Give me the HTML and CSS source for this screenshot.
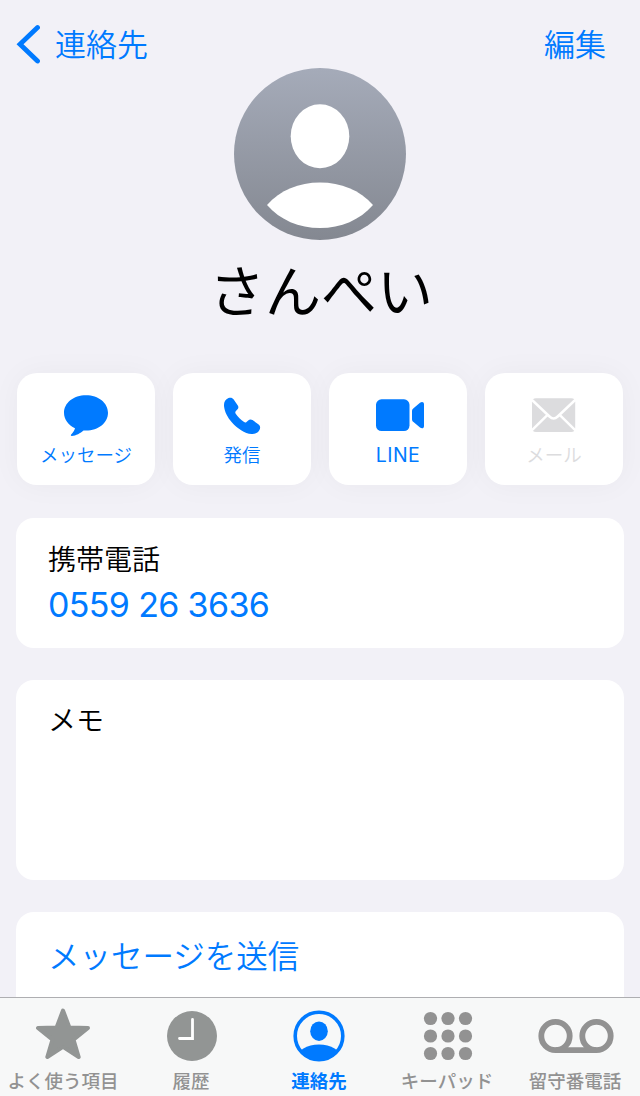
FILE: index.html
```html
<!DOCTYPE html>
<html lang="ja">
<head>
    <meta charset="UTF-8">
    <meta name="viewport" content="width=device-width, initial-scale=1.0">
    <title>連絡先</title>
    <link rel="stylesheet" href="styles.css">
</head>
<body>
    <div class="screen">
        <div class="content">
            <div class="navbar">
                <a class="back">
                    <svg width="24" height="40" viewBox="0 0 24 40"><path d="M21.5 3.5 L4 20.2 L21.5 37" fill="none" stroke="#007aff" stroke-width="4.8" stroke-linecap="round" stroke-linejoin="miter"/></svg>
                    <span>連絡先</span>
                </a>
                <a class="edit">編集</a>
            </div>

            <svg class="avatar" width="172" height="172" viewBox="0 0 172 172">
                <defs>
                    <linearGradient id="avatarBg" x1="0" y1="0" x2="0" y2="1">
                        <stop offset="0" stop-color="#a5abb9"/>
                        <stop offset="1" stop-color="#848891"/>
                    </linearGradient>
                </defs>
                <circle cx="86" cy="86" r="86" fill="url(#avatarBg)"/>
                <ellipse cx="86" cy="68.3" rx="29.3" ry="32" fill="#fff"/>
                <path d="M33 137 C46 122 65 114.5 86 114.5 C107 114.5 126 122 139 137 C126 152 107 160 86 160 C65 160 46 152 33 137 Z" fill="#fff"/>
            </svg>
            <h1 class="name">さんぺい</h1>

            <div class="actions">
                <a class="action">
                    <svg width="50" height="48" viewBox="0 0 50 48"><path d="M25 4.2 C37.5 4.2 47 11.8 47 21.8 C47 31.8 37.5 39.6 25 39.6 L22.5 39.5 C19.5 42.2 15 44.8 10.8 44.9 C9.6 44.9 9.6 44 10.4 43.2 C12.3 41.3 13.5 39.5 14 37.3 C7.4 34.2 3 28.5 3 21.8 C3 11.8 12.5 4.2 25 4.2 Z" fill="#007aff"/></svg>
                    <span>メッセージ</span>
                </a>
                <a class="action">
                    <svg width="50" height="48" viewBox="0 0 50 48"><path d="M11.5 7.1 C13.7 6.4 15.4 6.8 16.7 8.6 L20.8 14.4 C21.8 15.9 21.5 17.4 20.3 18.6 L18.9 20.1 C18.1 20.9 18.1 21.7 18.7 22.7 C20.8 25.8 23.9 28.9 27.1 31.1 C28 31.7 28.8 31.6 29.5 30.9 L31.2 29.5 C32.4 28.3 34 28.1 35.5 29.1 L41.3 33.2 C43.3 34.6 43.5 36.4 42.7 38.5 C41.3 41.7 38.3 43.2 34.7 43 C27.5 42.5 20.3 37.2 15 31.4 C10.6 26.5 7.5 20.5 7 14.9 C6.8 11.3 8.3 8.3 11.5 7.1 Z" fill="#007aff"/></svg>
                    <span>発信</span>
                </a>
                <a class="action">
                    <svg width="50" height="48" viewBox="0 0 50 48">
                        <rect x="3" y="8.3" width="33.5" height="31.7" rx="5.5" fill="#007aff"/>
                        <path d="M39 20.3 C39 18.9 39.4 18.1 40.5 17.2 L47 11.7 C49 10.2 51 10.9 51 13.2 L51 35 C51 37.3 49 38 47 36.5 L40.5 31 C39.4 30.1 39 29.3 39 27.9 Z" fill="#007aff"/>
                    </svg>
                    <span class="latin">LINE</span>
                </a>
                <a class="action disabled">
                    <svg width="50" height="48" viewBox="0 0 50 48">
                        <rect x="3" y="7.2" width="43.2" height="33.8" rx="4" fill="#dcdcde"/>
                        <path d="M2.5 8.5 L20.5 25.5 Q24.6 29.5 28.7 25.5 L46.7 8.5 M2.5 39.7 L18.3 24.2 M46.7 39.7 L30.9 24.2" fill="none" stroke="#fff" stroke-width="2.5"/>
                    </svg>
                    <span>メール</span>
                </a>
            </div>

            <div class="card phone">
                <div class="label">携帯電話</div>
                <div class="number">0559 26 3636</div>
            </div>
            <div class="card memo">
                <div class="label">メモ</div>
            </div>
            <div class="card send">
                <a class="link">メッセージを送信</a>
            </div>
        </div>

        <div class="tabbar">
            <a class="tab">
                <svg width="80" height="60" viewBox="0 0 80 60"><path d="M40 12.5 L46.4 29.4 L65 30 L50.5 41.6 L55.7 59 L40 48.9 L24.3 59 L29.5 41.6 L15 30 L33.6 29.4 Z" fill="#929594" stroke="#929594" stroke-width="4" stroke-linejoin="round"/></svg>
                <span>よく使う項目</span>
            </a>
            <a class="tab">
                <svg width="80" height="60" viewBox="0 0 80 60">
                    <circle cx="41" cy="38" r="25" fill="#929594"/>
                    <path d="M41.5 21.5 V40.5 H28.5" fill="none" stroke="#fff" stroke-width="2.8" stroke-linecap="round"/>
                </svg>
                <span>履歴</span>
            </a>
            <a class="tab active">
                <svg width="80" height="60" viewBox="0 0 80 60">
                    <defs><clipPath id="ring"><circle cx="40" cy="38" r="24"/></clipPath></defs>
                    <circle cx="40" cy="38" r="23.8" fill="none" stroke="#007aff" stroke-width="3.6"/>
                    <ellipse cx="40" cy="33.2" rx="8.8" ry="9.7" fill="#007aff"/>
                    <ellipse cx="40" cy="60" rx="22" ry="13.5" fill="#007aff" clip-path="url(#ring)"/>
                </svg>
                <span>連絡先</span>
            </a>
            <a class="tab">
                <svg width="80" height="60" viewBox="0 0 80 60" fill="#929292">
                    <circle cx="23.5" cy="20.5" r="6.6"/><circle cx="41" cy="20.5" r="6.6"/><circle cx="58.5" cy="20.5" r="6.6"/>
                    <circle cx="23.5" cy="38" r="6.6"/><circle cx="41" cy="38" r="6.6"/><circle cx="58.5" cy="38" r="6.6"/>
                    <circle cx="23.5" cy="55.5" r="6.6"/><circle cx="41" cy="55.5" r="6.6"/><circle cx="58.5" cy="55.5" r="6.6"/>
                </svg>
                <span>キーパッド</span>
            </a>
            <a class="tab">
                <svg width="80" height="60" viewBox="0 0 80 60" fill="none" stroke="#929292" stroke-width="5.8">
                    <circle cx="20.5" cy="38" r="14.2"/>
                    <circle cx="61.5" cy="38" r="14.2"/>
                    <path d="M20.5 52.1 H61.5"/>
                </svg>
                <span>留守番電話</span>
            </a>
        </div>
    </div>
</body>
</html>
```
FILE: styles.css
```css
body {
    margin: 0;
    font-family: Inter, "Noto Sans CJK JP", sans-serif;
    font-weight: 350;
    background: #f2f1f7;
    color: #000;
}
.screen {
    display: flex;
    flex-direction: column;
    height: 1096px;
    overflow: hidden;
}
.content {
    flex: 1;
    min-height: 0;
    overflow: hidden;
    padding: 0 16px;
}
.navbar {
    display: flex;
    justify-content: space-between;
    align-items: center;
    height: 68px;
    padding: 20px 18px 0 0;
    box-sizing: border-box;
    font-size: 31px;
    line-height: 48px;
    color: #007aff;
}
.back {
    display: flex;
    align-items: center;
    gap: 15px;
}
.back span,
.edit {
    padding-top: 2px;
}
.avatar {
    display: block;
    margin: 0 auto;
}
.name {
    margin: 10px 0 0;
    padding-left: 2px;
    height: 84px;
    line-height: 84px;
    font-size: 56px;
    font-weight: 400;
    text-align: center;
}
.actions {
    display: flex;
    gap: 18px;
    padding: 0 1px;
    margin-top: 39px;
}
.action {
    flex: 1;
    height: 112px;
    box-sizing: border-box;
    padding-top: 18px;
    display: flex;
    flex-direction: column;
    align-items: center;
    background: #fff;
    border-radius: 20px;
    box-shadow: 0 0 30px rgba(0,0,0,0.04);
    color: #007aff;
    font-size: 18.5px;
    line-height: 28px;
}
.action svg {
    overflow: visible;
}
.action span {
    margin-top: 2px;
}
.action.disabled {
    color: #dcdcde;
}
.action .latin {
    font-weight: 400;
    font-size: 19.5px;
    letter-spacing: 0.5px;
}
.card {
    position: relative;
    background: #fff;
    border-radius: 18px;
    margin-top: 32px;
    padding: 0 32px;
    box-sizing: border-box;
}
.label {
    font-size: 28px;
    line-height: 40px;
}
.phone {
    height: 130px;
    margin-top: 33px;
    padding-top: 22px;
}
.number {
    font-size: 34px;
    font-weight: 400;
    line-height: 50px;
    letter-spacing: -0.65px;
    color: #007aff;
}
.memo {
    height: 200px;
    padding-top: 21px;
}
.send {
    height: 120px;
    padding-top: 21px;
}
.link {
    font-size: 31.5px;
    line-height: 48px;
    color: #007aff;
}
.tabbar {
    display: flex;
    flex: none;
    height: 99px;
    box-sizing: border-box;
    border-top: 1px solid #aeaeb1;
    background: #f7f8f8;
}
.tab {
    flex: none;
    width: 128px;
    display: flex;
    flex-direction: column;
    align-items: center;
    color: #929292;
    font-size: 18.5px;
    font-weight: 500;
    line-height: 26px;
    white-space: nowrap;
}
.tab:first-child {
    margin-left: -1px;
}
.tab svg {
    overflow: visible;
}
.tab span {
    margin-top: 10px;
}
.tab.active {
    color: #007aff;
    font-weight: 700;
}
```
